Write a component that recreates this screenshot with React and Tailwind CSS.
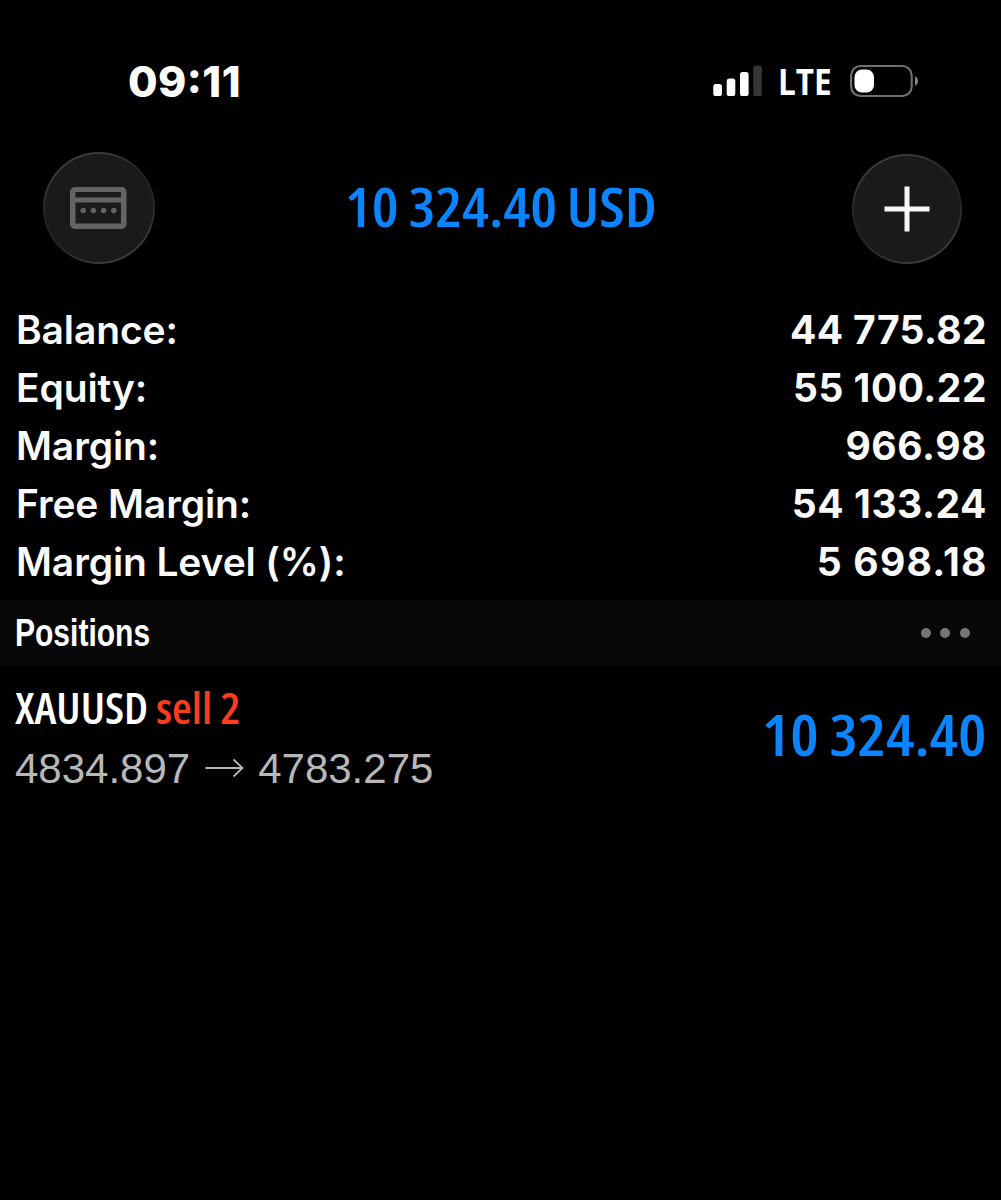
import React from "react";

const summary = [
  { label: "Balance:", value: "44 775.82", tracking: "tracking-[0.35px] mr-[-0.35px]" },
  { label: "Equity:", value: "55 100.22", tracking: "tracking-[0.5px] mr-[-0.5px]" },
  { label: "Margin:", value: "966.98", tracking: "tracking-[0.6px] mr-[-0.6px]" },
  { label: "Free Margin:", value: "54 133.24", tracking: "tracking-[0.55px] mr-[-0.55px]" },
  { label: "Margin Level (%):", value: "5 698.18", tracking: "tracking-[1.250px] mr-[-1.250px]" },
];

function SignalIcon() {
  return (
    <svg width="49" height="32" viewBox="0 0 49 32" className="shrink-0">
      <rect x="0.3" y="19" width="8.6" height="12" rx="2.6" fill="#fff" />
      <rect x="13.7" y="13.5" width="8.6" height="17.5" rx="2.6" fill="#fff" />
      <rect x="27" y="7" width="8.6" height="24" rx="2.6" fill="#fff" />
      <rect x="40.3" y="0.5" width="8.6" height="30.5" rx="2.6" fill="#353535" />
    </svg>
  );
}

function BatteryIcon() {
  return (
    <svg width="69" height="34" viewBox="0 0 69 34" className="shrink-0">
      <rect x="1.1" y="2" width="60.6" height="30" rx="9.5" fill="none" stroke="#707070" strokeWidth="2.1" />
      <rect x="4.5" y="5.6" width="19.5" height="22.8" rx="7.5" fill="#fff" />
      <path d="M65 12.200c2 .9 3 2.700 3 4.800s-1 3.900-3 4.800z" fill="#858585" />
    </svg>
  );
}

function StatusBar() {
  return (
    <div className="flex h-[82px] items-center justify-between pr-[82px] pl-[127.500px]">
      <span className="mt-[2px] origin-left scale-x-[1.02] text-[42px] leading-none font-extrabold tracking-[0.4px] [font-feature-settings:'case','calt']">
        09:11
      </span>
      <div className="flex items-center">
        <SignalIcon />
        <span className="mt-px ml-[16px] w-[56px] origin-left scale-x-[0.9] font-['Open_Sans',sans-serif] text-[35px] leading-[40px] font-bold">
          LTE
        </span>
        <span className="ml-4 flex">
          <BatteryIcon />
        </span>
      </div>
    </div>
  );
}

function AccountIcon() {
  return (
    <svg width="57" height="42" viewBox="0 0 57 42" fill="#646464">
      <path
        fillRule="evenodd"
        d="M5 0h46.500a5 5 0 0 1 5 5v32a5 5 0 0 1-5 5H5a5 5 0 0 1-5-5V5a5 5 0 0 1 5-5zM5.500 5v5.500h45.500V5zM5.500 15.500V36.500h45.500V15.500z"
      />
      <circle cx="13.200" cy="23.500" r="2.700" />
      <circle cx="23.400" cy="23.500" r="2.700" />
      <circle cx="33.600" cy="23.500" r="2.700" />
      <circle cx="43.800" cy="23.500" r="2.700" />
    </svg>
  );
}

const ring = "grid place-items-center rounded-full bg-[linear-gradient(155deg,#444_5%,#242424_40%,#242424_60%,#444_95%)]";

function Header() {
  return (
    <header className="flex h-[116px] items-start justify-between pr-[39px] pl-[43px]">
      <button className={`${ring} mt-[2px] size-[111.500px]`}>
        <span className="grid size-[107.500px] place-items-center rounded-full bg-[#1a1a1a]">
          <AccountIcon />
        </span>
      </button>
      <h1 className="mt-[21px] -ml-[4px] scale-x-[1.1] font-['Open_Sans',sans-serif] text-[54.600px] leading-[70px] font-[650] whitespace-nowrap text-[#0a84ff] [font-stretch:75%] [word-spacing:-1px]">
        10 324.40 USD
      </h1>
      <button className={`${ring} mt-[4px] size-[110px]`}>
        <span className="grid size-[106.500px] place-items-center rounded-full bg-[#1a1a1a]">
          <svg width="46" height="46" viewBox="0 0 46 46" stroke="#f7f7f7" strokeWidth="5">
            <path d="M0.500 23h45M23 0.500v45" />
          </svg>
        </span>
      </button>
    </header>
  );
}

export default function App() {
  return (
    <main className="h-[1200px] w-[1001px] overflow-hidden bg-black pt-[40px] font-['Inter',sans-serif] text-white">
      <StatusBar />
      <div className="h-[28px]" />
      <Header />
      <div className="h-[35px]" />
      <dl className="pr-[14.500px] pl-[16px] text-[39px] text-[#fafafa]">
        {summary.map((row) => (
          <div key={row.label} className="flex h-[58px] items-center justify-between leading-[58px]">
            <dt className="font-semibold tracking-[-0.120px] [font-feature-settings:'calt'_0]">{row.label}</dt>
            <dd className={`font-[650] ${row.tracking}`}>{row.value}</dd>
          </div>
        ))}
      </dl>

      <section className="mt-[9px] flex h-[65px] items-center justify-between bg-[#080808] pr-[31.500px] pl-[15px]">
        <h2 className="mt-[2px] origin-left scale-x-[0.77] font-['Liberation_Sans',sans-serif] text-[39px] font-bold">
          Positions
        </h2>
        <div className="flex gap-[9.500px]">
          <span className="size-[10px] rounded-full bg-[#757575]" />
          <span className="size-[10px] rounded-full bg-[#757575]" />
          <span className="size-[10px] rounded-full bg-[#757575]" />
        </div>
      </section>

      <section className="flex items-start justify-between pr-[15px] pl-[15px]">
        <div>
          <div className="mt-[13px] flex h-[60px] items-center font-['Open_Sans',sans-serif] text-[42.500px] leading-[60px] font-semibold [font-stretch:75%]">
            <span className="w-[140.500px] origin-left scale-x-[1.060] whitespace-nowrap">XAUUSD</span>
            <span className="origin-left scale-x-[1.065] whitespace-nowrap text-[#fa3c1e]">sell 2</span>
          </div>
          <div className="flex h-[62px] items-center font-['Liberation_Sans',sans-serif] text-[42px] leading-[62px] text-[#b8b8b8]">
            <span>4834.897</span>
            <svg width="40" height="20" viewBox="0 0 40 20" fill="none" stroke="#b8b8b8" strokeWidth="1.800" className="mt-[-2px] mr-[13.500px] ml-[14.500px]">
              <path d="M0.500 10H37.500M28.500 1.500L37.500 10L28.500 18.500" />
            </svg>
            <span>4783.275</span>
          </div>
        </div>
        <span className="mt-[34px] origin-right scale-x-[1.115] font-['Open_Sans',sans-serif] text-[57px] leading-[70px] font-[650] whitespace-nowrap text-[#0a84ff] [font-stretch:75%] [word-spacing:-1px]">
          10 324.40
        </span>
      </section>
    </main>
  );
}
